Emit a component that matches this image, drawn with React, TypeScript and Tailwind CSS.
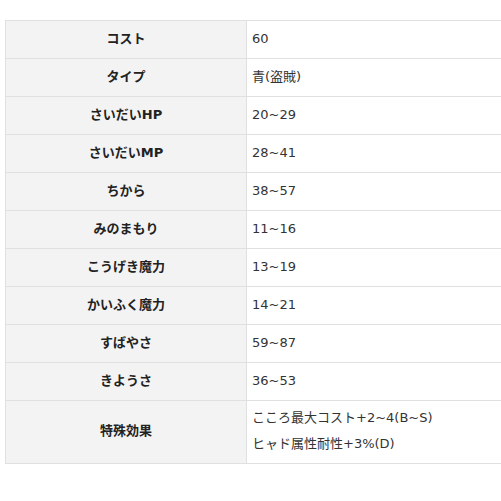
const rows: [string, string[]][] = [
  ["コスト", ["60"]],
  ["タイプ", ["青(盗賊)"]],
  ["さいだいHP", ["20~29"]],
  ["さいだいMP", ["28~41"]],
  ["ちから", ["38~57"]],
  ["みのまもり", ["11~16"]],
  ["こうげき魔力", ["13~19"]],
  ["かいふく魔力", ["14~21"]],
  ["すばやさ", ["59~87"]],
  ["きようさ", ["36~53"]],
  ["特殊効果", ["こころ最大コスト+2~4(B~S)", "ヒャド属性耐性+3%(D)"]],
];

export default function App() {
  return (
    <div
      className="min-h-[501px] w-[501px] overflow-hidden bg-white pt-5 pl-[5px] text-[13px] text-[#333]"
      style={{ fontFamily: '"DejaVu Sans", "Noto Sans CJK JP", sans-serif' }}
    >
      <table className="w-[500px] border-collapse">
        <tbody>
          {rows.map(([label, values]) => (
            <tr key={label} className={values.length > 1 ? "h-[63px]" : "h-[38px]"}>
              <th className="w-[241px] border border-[#e0e0e0] bg-[#f3f3f3] p-0 pb-[2px] text-center font-bold text-[#222]">
                {label}
              </th>
              <td className="border border-[#e0e0e0] px-[5px] py-0 pb-[2px] align-middle">
                {values.map((v) => (
                  <div key={v} className="leading-[26px]">
                    {v}
                  </div>
                ))}
              </td>
            </tr>
          ))}
        </tbody>
      </table>
    </div>
  );
}
